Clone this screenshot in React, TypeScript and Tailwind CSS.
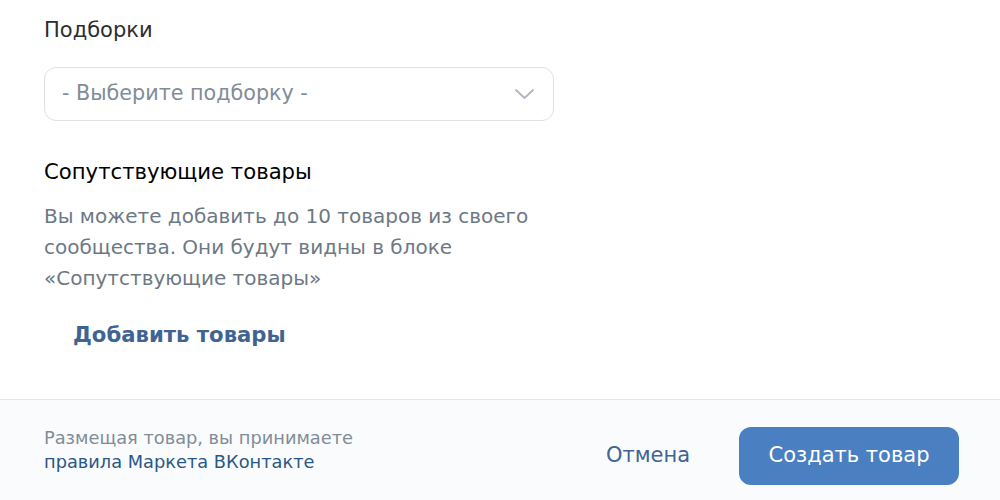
import React from "react";

export default function App() {
  return (
    <div className="w-[1000px] h-[500px] bg-white flex flex-col overflow-hidden font-['DejaVu_Sans',sans-serif]">
      <div className="flex-1 flex flex-col pl-[44px] pt-[16px]">
        <div className="text-[21px] leading-[28px] text-[#2c2d2e]">Подборки</div>
        <div className="mt-[23px] w-[510px] h-[54px] rounded-[12px] border border-[#dfe1e5] flex items-center justify-between pl-[17px] pr-[18px]">
          <span className="text-[20.7px] text-[#818c99]">- Выберите подборку -</span>
          <svg width="21" height="12" viewBox="0 0 21 12" fill="none">
            <path d="M2 2l8.5 8 8.5-8" stroke="#aeb7c2" strokeWidth="1.8" strokeLinecap="round" strokeLinejoin="round" />
          </svg>
        </div>
        <div className="mt-[37px] text-[21.2px] leading-[28px] text-[#000000]">Сопутствующие товары</div>
        <div className="mt-[15px] w-[500px] text-[20px] leading-[31px] text-[#6d7885]">
          Вы можете добавить до 10 товаров из своего сообщества. Они будут видны в блоке «Сопутствующие товары»
        </div>
        <div className="mt-[25px] ml-[29px] text-[21.2px] font-bold text-[#3f6493]">Добавить товары</div>
      </div>
      <div className="h-[101px] border-t border-[#e3e4e7] bg-[#fafbfc] flex items-center pl-[44px] pr-[41px]">
        <div className="flex-1 text-[17.8px] leading-[24px] text-[#818c99]">
          <div>Размещая товар, вы принимаете</div>
          <div className="text-[#2a5885]">правила Маркета ВКонтакте</div>
        </div>
        <div className="flex items-center pt-[12px]">
          <div className="text-[21px] text-[#3f6493] mr-[49px]">Отмена</div>
          <div className="w-[220px] h-[58px] rounded-[12px] bg-[#4a7fc1] flex items-center justify-center text-white text-[21px]">Создать товар</div>
        </div>
      </div>
    </div>
  );
}
